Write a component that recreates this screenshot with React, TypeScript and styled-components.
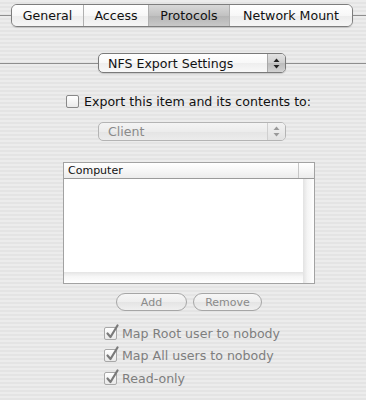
import React from "react";
import styled, { createGlobalStyle } from "styled-components";

const GlobalStyle = createGlobalStyle`
  html, body {
    margin: 0;
    padding: 0;
  }
  body {
    font-family: "DejaVu Sans", "Liberation Sans", sans-serif;
  }
`;

const Page = styled.div`
  width: 366px;
  height: 400px;
  overflow: hidden;
  display: flex;
  flex-direction: column;
  align-items: flex-start;
  background: repeating-linear-gradient(
    to bottom,
    #ececec 0px,
    #ececec 2px,
    #e4e4e4 2px,
    #e4e4e4 4px
  );
`;

const LineRow = styled.div<{ $top: number; $height: number }>`
  width: 100%;
  display: flex;
  align-items: center;
  margin-top: ${(p) => p.$top}px;
  height: ${(p) => p.$height}px;
`;

const Rule = styled.div<{ $w?: number }>`
  height: 1px;
  background: #8e8e8e;
  flex: ${(p) => (p.$w ? `0 0 ${p.$w}px` : "1")};
`;

const TabGroup = styled.div`
  display: flex;
  height: 21px;
  border: 1px solid #7d7d7d;
  border-radius: 6px;
  overflow: hidden;
  box-shadow: 0 1px 1px rgba(0, 0, 0, 0.15);
`;

const Tab = styled.div<{ $w: number; $active?: boolean }>`
  width: ${(p) => p.$w}px;
  display: flex;
  align-items: center;
  justify-content: center;
  font-size: 12.6px;
  color: #111;
  background: ${(p) =>
    p.$active
      ? "linear-gradient(to bottom, #d8d8d8 0%, #c2c2c2 50%, #b4b4b4 51%, #c8c8c8 100%)"
      : "linear-gradient(to bottom, #ffffff 0%, #f7f7f7 50%, #ececec 51%, #f6f6f6 100%)"};
  & + & {
    border-left: 1px solid #b0b0b0;
  }
`;

const Popup = styled.div<{ $disabled?: boolean; $left?: number }>`
  width: 188px;
  height: 100%;
  box-sizing: border-box;
  margin-left: ${(p) => p.$left ?? 0}px;
  border: 1px solid ${(p) => (p.$disabled ? "#b4b4b4" : "#7a7a7a")};
  border-radius: 5px;
  display: flex;
  overflow: hidden;
  background: ${(p) =>
    p.$disabled
      ? "linear-gradient(to bottom, #f4f4f4 0%, #ececec 50%, #e4e4e4 51%, #ececec 100%)"
      : "linear-gradient(to bottom, #ffffff 0%, #f8f8f8 50%, #eeeeee 51%, #f8f8f8 100%)"};
  box-shadow: ${(p) => (p.$disabled ? "none" : "0 1px 1px rgba(0,0,0,0.15)")};
`;

const PopupLabel = styled.div<{ $disabled?: boolean }>`
  flex: 1;
  display: flex;
  align-items: center;
  padding-left: 9px;
  font-size: 12.6px;
  color: ${(p) => (p.$disabled ? "#8a8a8a" : "#111")};
`;

const PopupArrows = styled.div<{ $disabled?: boolean }>`
  width: 17px;
  display: flex;
  align-items: center;
  justify-content: center;
  border-left: 1px solid ${(p) => (p.$disabled ? "#cfcfcf" : "#a8a8a8")};
  background: ${(p) =>
    p.$disabled
      ? "linear-gradient(to bottom, #f2f2f2, #e2e2e2)"
      : "linear-gradient(to bottom, #e2e2e2 0%, #cfcfcf 50%, #bcbcbc 51%, #d2d2d2 100%)"};
`;

const CheckRow = styled.label<{ $top: number; $left?: number; $disabled?: boolean }>`
  display: flex;
  align-items: center;
  gap: 5px;
  margin-top: ${(p) => p.$top}px;
  margin-left: ${(p) => p.$left ?? 0}px;
  height: 15px;
  font-size: 12.6px;
  color: ${(p) => (p.$disabled ? "#7e7e7e" : "#111")};
`;

const Box = styled.span<{ $disabled?: boolean }>`
  position: relative;
  width: 13px;
  height: 13px;
  box-sizing: border-box;
  border: 1px solid ${(p) => (p.$disabled ? "#a8a8a8" : "#888")};
  border-radius: 2px;
  background: linear-gradient(to bottom, #ffffff, #e9e9e9);
  flex: 0 0 auto;
`;

const CheckMark = styled.svg`
  position: absolute;
  left: 0;
  top: -4px;
`;

const OptionList = styled.div`
  display: flex;
  flex-direction: column;
  margin-left: 104px;
`;

const Table = styled.div`
  margin-top: 21px;
  margin-left: 63px;
  width: 252px;
  height: 122px;
  box-sizing: border-box;
  border: 1px solid #a2a2a2;
  background: #fff;
  display: flex;
  flex-direction: column;
`;

const Header = styled.div`
  height: 15px;
  display: flex;
  border-bottom: 1px solid #9a9a9a;
  background: linear-gradient(to bottom, #ffffff 0%, #f6f6f6 50%, #ececec 100%);
`;

const HeaderCell = styled.div<{ $w?: number }>`
  ${(p) => (p.$w ? `width: ${p.$w}px;` : "flex: 1;")}
  font-size: 11px;
  line-height: 15px;
  padding-left: 4px;
  color: #111;
  & + & {
    border-left: 1px solid #c6c6c6;
  }
`;

const TableBody = styled.div`
  flex: 1;
  display: flex;
`;

const ListArea = styled.div`
  flex: 1;
  display: flex;
  flex-direction: column;
`;

const Rows = styled.div`
  flex: 1;
  background: #fff;
`;

const HScroll = styled.div`
  height: 11px;
  background: linear-gradient(to bottom, #e4e4e4, #f6f6f6 40%, #ffffff);
`;

const VScroll = styled.div`
  width: 11px;
  background: linear-gradient(to right, #e2e2e2, #f4f4f4 40%, #ffffff);
`;

const ButtonRow = styled.div`
  display: flex;
  gap: 6px;
  margin-top: 9px;
  margin-left: 116px;
  height: 18px;
`;

const PillButton = styled.div<{ $w: number }>`
  width: ${(p) => p.$w}px;
  box-sizing: border-box;
  border: 1px solid #a6a6a6;
  border-radius: 9px;
  display: flex;
  align-items: center;
  justify-content: center;
  font-size: 11px;
  color: #8a8a8a;
  background: linear-gradient(to bottom, #f6f6f6 0%, #eeeeee 50%, #e4e4e4 51%, #f0f0f0 100%);
`;

const Arrows = ({ color }: { color: string }) => (
  <svg width="7" height="11" viewBox="0 0 7 11">
    <path d="M3.5 0.5 L6.5 4 L0.5 4 Z" fill={color} />
    <path d="M3.5 10.5 L6.5 7 L0.5 7 Z" fill={color} />
  </svg>
);

const Check = ({ checked, disabled }: { checked?: boolean; disabled?: boolean }) => (
  <Box $disabled={disabled}>
    {checked && (
      <CheckMark width="15" height="16" viewBox="0 0 15 16">
        <path
          d="M2.5 9.5 L5.5 13 L12.5 1.5"
          fill="none"
          stroke={disabled ? "#7a7a7a" : "#222"}
          strokeWidth="2.2"
          strokeLinecap="round"
          strokeLinejoin="round"
        />
      </CheckMark>
    )}
  </Box>
);

export default function App() {
  return (
    <>
      <GlobalStyle />
      <Page>
        <LineRow $top={4} $height={23}>
          <Rule $w={11} />
          <TabGroup>
            <Tab $w={71}>General</Tab>
            <Tab $w={64}>Access</Tab>
            <Tab $w={80} $active>
              Protocols
            </Tab>
            <Tab $w={122}>Network Mount</Tab>
          </TabGroup>
          <Rule />
        </LineRow>

        <LineRow $top={26} $height={20}>
          <Rule $w={98} />
          <Popup>
            <PopupLabel>NFS Export Settings</PopupLabel>
            <PopupArrows>
              <Arrows color="#222" />
            </PopupArrows>
          </Popup>
          <Rule />
        </LineRow>

        <CheckRow $top={21} $left={66}>
          <Check />
          Export this item and its contents to:
        </CheckRow>

        <LineRow $top={13} $height={19}>
          <Popup $disabled $left={98}>
            <PopupLabel $disabled>Client</PopupLabel>
            <PopupArrows $disabled>
              <Arrows color="#999" />
            </PopupArrows>
          </Popup>
        </LineRow>

        <Table>
          <Header>
            <HeaderCell>Computer</HeaderCell>
            <HeaderCell $w={11} />
          </Header>
          <TableBody>
            <ListArea>
              <Rows />
              <HScroll />
            </ListArea>
            <VScroll />
          </TableBody>
        </Table>

        <ButtonRow>
          <PillButton $w={71}>Add</PillButton>
          <PillButton $w={69}>Remove</PillButton>
        </ButtonRow>

        <OptionList>
          <CheckRow $top={15} $disabled>
            <Check checked disabled />
            Map Root user to nobody
          </CheckRow>
          <CheckRow $top={7} $disabled>
            <Check checked disabled />
            Map All users to nobody
          </CheckRow>
          <CheckRow $top={8} $disabled>
            <Check checked disabled />
            Read-only
          </CheckRow>
        </OptionList>
      </Page>
    </>
  );
}
